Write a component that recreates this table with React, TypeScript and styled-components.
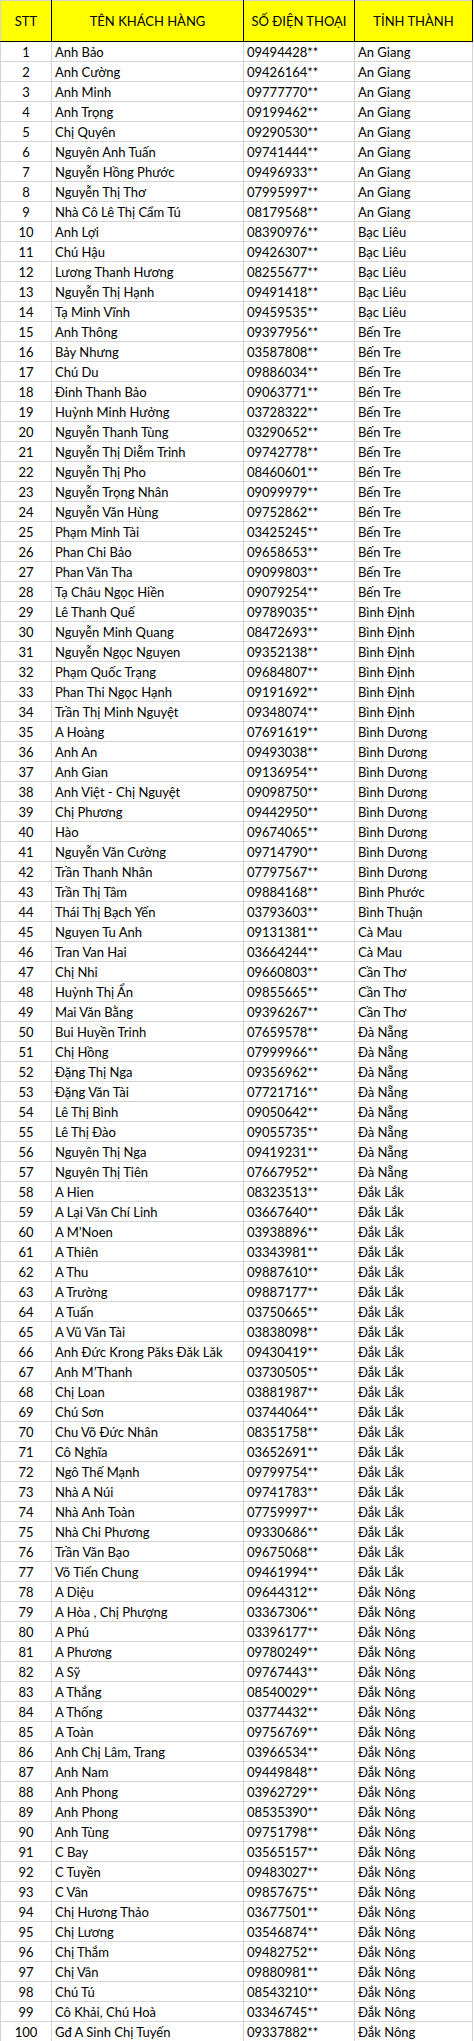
import React from 'react';
import styled, { createGlobalStyle } from 'styled-components';

type Row = [string, string, string];

// name, phone, province — STT is the index
const rows: Row[] = [
  ['Anh Bảo', '09494428**', 'An Giang'],
  ['Anh Cường', '09426164**', 'An Giang'],
  ['Anh Minh', '09777770**', 'An Giang'],
  ['Anh Trọng', '09199462**', 'An Giang'],
  ['Chị Quyên', '09290530**', 'An Giang'],
  ['Nguyên Anh Tuấn', '09741444**', 'An Giang'],
  ['Nguyễn Hồng Phước', '09496933**', 'An Giang'],
  ['Nguyễn Thị Thơ', '07995997**', 'An Giang'],
  ['Nhà Cô Lê Thị Cẩm Tú', '08179568**', 'An Giang'],
  ['Anh Lợi', '08390976**', 'Bạc Liêu'],
  ['Chú Hậu', '09426307**', 'Bạc Liêu'],
  ['Lương Thanh Hương', '08255677**', 'Bạc Liêu'],
  ['Nguyễn Thị Hạnh', '09491418**', 'Bạc Liêu'],
  ['Tạ Minh Vĩnh', '09459535**', 'Bạc Liêu'],
  ['Anh Thông', '09397956**', 'Bến Tre'],
  ['Bảy Nhưng', '03587808**', 'Bến Tre'],
  ['Chú Du', '09886034**', 'Bến Tre'],
  ['Đinh Thanh Bảo', '09063771**', 'Bến Tre'],
  ['Huỳnh Minh Hưởng', '03728322**', 'Bến Tre'],
  ['Nguyễn Thanh Tùng', '03290652**', 'Bến Tre'],
  ['Nguyễn Thị Diễm Trinh', '09742778**', 'Bến Tre'],
  ['Nguyễn Thị Pho', '08460601**', 'Bến Tre'],
  ['Nguyễn Trọng Nhân', '09099979**', 'Bến Tre'],
  ['Nguyễn Văn Hùng', '09752862**', 'Bến Tre'],
  ['Phạm Minh Tài', '03425245**', 'Bến Tre'],
  ['Phan Chi Bảo', '09658653**', 'Bến Tre'],
  ['Phan Văn Tha', '09099803**', 'Bến Tre'],
  ['Tạ Châu Ngọc Hiền', '09079254**', 'Bến Tre'],
  ['Lê Thanh Quế', '09789035**', 'Bình Định'],
  ['Nguyễn Minh Quang', '08472693**', 'Bình Định'],
  ['Nguyễn Ngọc Nguyen', '09352138**', 'Bình Định'],
  ['Phạm Quốc Trạng', '09684807**', 'Bình Định'],
  ['Phan Thi Ngọc Hạnh', '09191692**', 'Bình Định'],
  ['Trần Thị Minh Nguyệt', '09348074**', 'Bình Định'],
  ['A Hoàng', '07691619**', 'Bình Dương'],
  ['Anh An', '09493038**', 'Bình Dương'],
  ['Anh Gian', '09136954**', 'Bình Dương'],
  ['Anh Việt - Chị Nguyệt', '09098750**', 'Bình Dương'],
  ['Chị Phương', '09442950**', 'Bình Dương'],
  ['Hào', '09674065**', 'Bình Dương'],
  ['Nguyễn Văn Cường', '09714790**', 'Bình Dương'],
  ['Trần Thanh Nhân', '07797567**', 'Bình Dương'],
  ['Trần Thị Tâm', '09884168**', 'Bình Phước'],
  ['Thái Thị Bạch Yến', '03793603**', 'Bình Thuận'],
  ['Nguyen Tu Anh', '09131381**', 'Cà Mau'],
  ['Tran Van Hai', '03664244**', 'Cà Mau'],
  ['Chị Nhi', '09660803**', 'Cần Thơ'],
  ['Huỳnh Thị Ẩn', '09855665**', 'Cần Thơ'],
  ['Mai Văn Bằng', '09396267**', 'Cần Thơ'],
  ['Bui Huyền Trinh', '07659578**', 'Đà Nẵng'],
  ['Chị Hồng', '07999966**', 'Đà Nẵng'],
  ['Đặng Thị Nga', '09356962**', 'Đà Nẵng'],
  ['Đặng Văn Tài', '07721716**', 'Đà Nẵng'],
  ['Lê Thị Bình', '09050642**', 'Đà Nẵng'],
  ['Lê Thị Đào', '09055735**', 'Đà Nẵng'],
  ['Nguyên Thị Nga', '09419231**', 'Đà Nẵng'],
  ['Nguyên Thị Tiên', '07667952**', 'Đà Nẵng'],
  ['A Hien', '08323513**', 'Đắk Lắk'],
  ['A Lại Văn Chí Linh', '03667640**', 'Đắk Lắk'],
  ['A M’Noen', '03938896**', 'Đắk Lắk'],
  ['A Thiên', '03343981**', 'Đắk Lắk'],
  ['A Thu', '09887610**', 'Đắk Lắk'],
  ['A Trường', '09887177**', 'Đắk Lắk'],
  ['A Tuấn', '03750665**', 'Đắk Lắk'],
  ['A Vũ Văn Tài', '03838098**', 'Đắk Lắk'],
  ['Anh Đức Krong Păks Đăk Lăk', '09430419**', 'Đắk Lắk'],
  ['Anh M’Thanh', '03730505**', 'Đắk Lắk'],
  ['Chị Loan', '03881987**', 'Đắk Lắk'],
  ['Chú Sơn', '03744064**', 'Đắk Lắk'],
  ['Chu Võ Đức Nhân', '08351758**', 'Đắk Lắk'],
  ['Cô Nghĩa', '03652691**', 'Đắk Lắk'],
  ['Ngô Thế Mạnh', '09799754**', 'Đắk Lắk'],
  ['Nhà A Núi', '09741783**', 'Đắk Lắk'],
  ['Nhà Anh Toàn', '07759997**', 'Đắk Lắk'],
  ['Nhà Chi Phương', '09330686**', 'Đắk Lắk'],
  ['Trần Văn Bạo', '09675068**', 'Đắk Lắk'],
  ['Võ Tiến Chung', '09461994**', 'Đắk Lắk'],
  ['A Diệu', '09644312**', 'Đắk Nông'],
  ['A Hòa , Chị Phượng', '03367306**', 'Đắk Nông'],
  ['A Phú', '03396177**', 'Đắk Nông'],
  ['A Phương', '09780249**', 'Đắk Nông'],
  ['A Sỹ', '09767443**', 'Đắk Nông'],
  ['A Thắng', '08540029**', 'Đắk Nông'],
  ['A Thống', '03774432**', 'Đắk Nông'],
  ['A Toàn', '09756769**', 'Đắk Nông'],
  ['Anh Chị Lâm, Trang', '03966534**', 'Đắk Nông'],
  ['Anh Nam', '09449848**', 'Đắk Nông'],
  ['Anh Phong', '03962729**', 'Đắk Nông'],
  ['Anh Phong', '08535390**', 'Đắk Nông'],
  ['Anh Tùng', '09751798**', 'Đắk Nông'],
  ['C Bay', '03565157**', 'Đắk Nông'],
  ['C Tuyền', '09483027**', 'Đắk Nông'],
  ['C Vân', '09857675**', 'Đắk Nông'],
  ['Chị Hương Thảo', '03677501**', 'Đắk Nông'],
  ['Chị Lương', '03546874**', 'Đắk Nông'],
  ['Chị Thắm', '09482752**', 'Đắk Nông'],
  ['Chị Vân', '09880981**', 'Đắk Nông'],
  ['Chú Tú', '08543210**', 'Đắk Nông'],
  ['Cô Khải, Chú Hoà', '03346745**', 'Đắk Nông'],
  ['Gđ A Sinh Chị Tuyến', '09337882**', 'Đắk Nông'],
];

const GlobalStyle = createGlobalStyle`
  html, body {
    margin: 0;
    padding: 0;
    background: #fff;
  }
`;

const Sheet = styled.table`
  border-collapse: collapse;
  table-layout: fixed;
  width: 473px;
  font-family: Lato, 'Liberation Sans', sans-serif;
  font-size: 13px;
  color: #000;
`;

const HeadCell = styled.th<{ $first?: boolean }>`
  height: 40px;
  padding: 0;
  background: #ffff00;
  font-weight: 400;
  text-align: center;
  vertical-align: middle;
  border: 1px solid #000;
  border-top-color: #d4d4d4;
  border-left-color: ${(p) => (p.$first ? '#d4d4d4' : '#000')};
`;

const BodyRow = styled.tr`
  height: 20px;
`;

const Cell = styled.td<{ $center?: boolean }>`
  padding: 2px 0 0 3px;
  line-height: 17px;
  white-space: nowrap;
  overflow: hidden;
  text-align: ${(p) => (p.$center ? 'center' : 'left')};
  border: 1px solid #d4d4d4;
  ${(p) => (p.$center ? 'padding-left: 0;' : '')}
`;

export default function App() {
  return (
    <>
      <GlobalStyle />
      <Sheet>
        <colgroup>
          <col style={{ width: 51 }} />
          <col style={{ width: 192 }} />
          <col style={{ width: 111 }} />
          <col style={{ width: 118 }} />
        </colgroup>
        <thead>
          <tr>
            <HeadCell $first>STT</HeadCell>
            <HeadCell>TÊN KHÁCH HÀNG</HeadCell>
            <HeadCell>SỐ ĐIỆN THOẠI</HeadCell>
            <HeadCell>TỈNH THÀNH</HeadCell>
          </tr>
        </thead>
        <tbody>
          {rows.map(([name, phone, province], i) => (
            <BodyRow key={i}>
              <Cell $center>{i + 1}</Cell>
              <Cell>{name}</Cell>
              <Cell>{phone}</Cell>
              <Cell>{province}</Cell>
            </BodyRow>
          ))}
        </tbody>
      </Sheet>
    </>
  );
}
